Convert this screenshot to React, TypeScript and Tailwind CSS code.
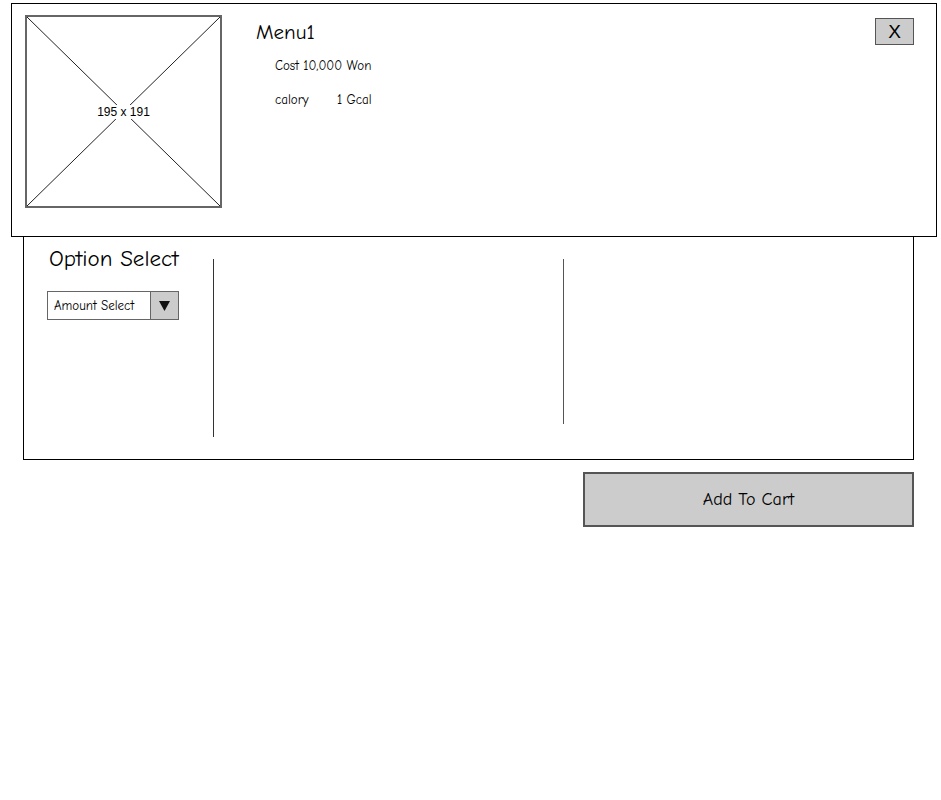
import React from 'react';

const font = { fontFamily: '"Comic Sans MS", "Comic Neue", "Liberation Sans", sans-serif' };

function ImagePlaceholder() {
  return (
    <div className="relative h-[193px] w-[197px] shrink-0 border-2 border-[#666666] bg-white">
      <svg className="absolute inset-0 h-full w-full" viewBox="0 0 193 189" preserveAspectRatio="none">
        <line x1="0" y1="0" x2="193" y2="189" stroke="#222" strokeWidth="1" />
        <line x1="193" y1="0" x2="0" y2="189" stroke="#222" strokeWidth="1" />
      </svg>
      <div className="absolute inset-0 flex items-center justify-center">
        <span className="bg-white px-[2px] text-[12px] leading-[14px] text-black" style={{ fontFamily: '"Liberation Sans", Arial, sans-serif' }}>
          195 x 191
        </span>
      </div>
    </div>
  );
}

export default function App() {
  return (
    <div className="min-h-[800px] w-[941px] bg-white text-black" style={font}>
      <div className="ml-[11px] mt-[3px] flex h-[234px] w-[926px] border border-black pl-[13px] pt-[11px] pr-[22px]">
        <ImagePlaceholder />
        <div className="ml-[34px] flex flex-col">
          <div className="mt-[5px] text-[21px] leading-[24px]">Menu1</div>
          <div className="ml-[19px] mt-[14px] text-[13px] leading-[16px]">Cost 10,000 Won</div>
          <div className="ml-[19px] mt-[18px] flex text-[13px] leading-[16px]">
            <span className="w-[62px]">calory</span>
            <span>1 Gcal</span>
          </div>
        </div>
        <div className="flex-1" />
        <button
          className="mt-[3px] flex h-[27px] w-[39px] items-center justify-center border border-[#555555] bg-[#cccccc] text-[19px] leading-none text-black"
          style={{ fontFamily: '"Liberation Sans", Arial, sans-serif' }}
        >
          X
        </button>
      </div>

      <div className="-mt-px ml-[23px] flex h-[224px] w-[891px] items-start border border-black">
        <div className="flex w-[189px] shrink-0 flex-col pl-[23px] pt-[10px]">
          <div className="ml-[2px] text-[23px] leading-[24px]">Option Select</div>
          <div className="mt-[20px] flex h-[29px] w-[132px] border border-[#666666] bg-white">
            <div className="flex flex-1 items-center pl-[6px] text-[13px]">Amount Select</div>
            <div className="flex w-[28px] items-center justify-center border-l border-[#666666] bg-[#cccccc]">
              <svg width="11" height="10" viewBox="0 0 11 10">
                <polygon points="0,0 11,0 5.5,10" fill="#111" />
              </svg>
            </div>
          </div>
        </div>
        <div className="mt-[22px] h-[178px] w-px bg-[#333333]" />
        <div className="w-[349px] shrink-0" />
        <div className="mt-[22px] h-[165px] w-px bg-[#555555]" />
      </div>

      <button className="ml-[583px] mt-[12px] flex h-[55px] w-[331px] items-center justify-center border-2 border-[#555555] bg-[#cccccc] text-[18px] text-black">
        Add To Cart
      </button>
    </div>
  );
}
